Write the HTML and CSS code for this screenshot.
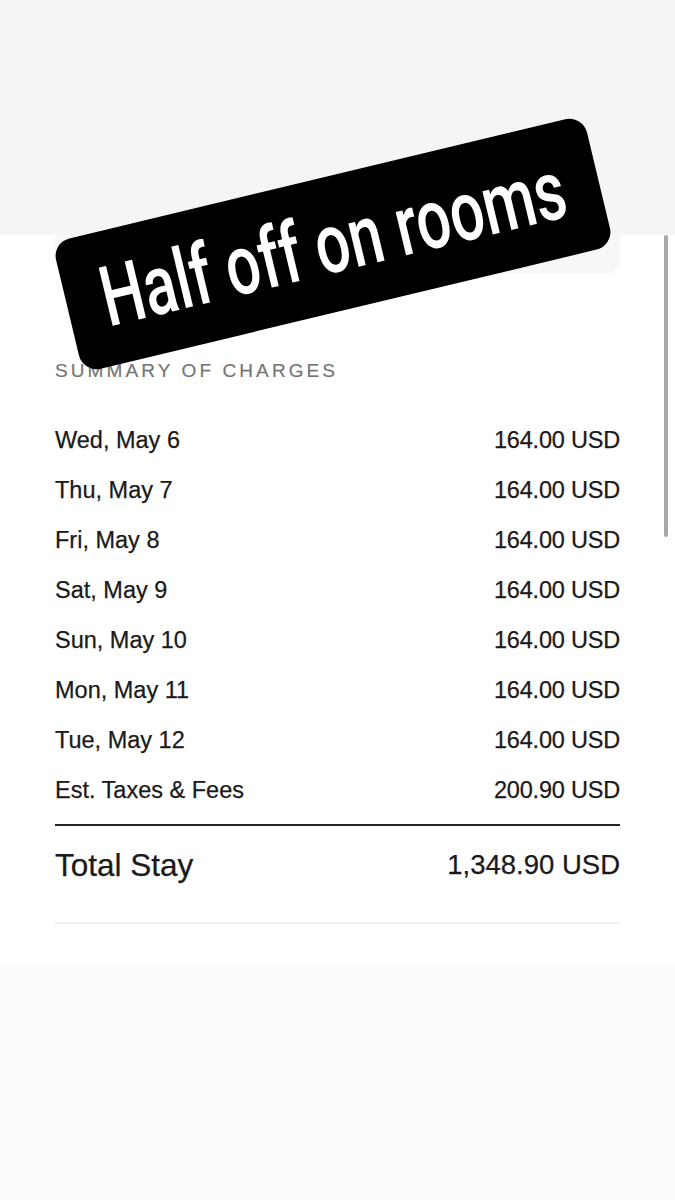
FILE: index.html
```html
<!DOCTYPE html>
<html lang="en">
<head>
<meta charset="utf-8">
<link rel="stylesheet" href="styles.css">
</head>
<body>
<div class="page">
  <div class="band"></div>
  <div class="content">
    <div class="card-tail"></div>
    <h2 class="heading">Summary of Charges</h2>
    <div class="rows">
      <div class="row"><span>Wed, May 6</span><span class="amount">164.00 USD</span></div>
      <div class="row"><span>Thu, May 7</span><span class="amount">164.00 USD</span></div>
      <div class="row"><span>Fri, May 8</span><span class="amount">164.00 USD</span></div>
      <div class="row"><span>Sat, May 9</span><span class="amount">164.00 USD</span></div>
      <div class="row"><span>Sun, May 10</span><span class="amount">164.00 USD</span></div>
      <div class="row"><span>Mon, May 11</span><span class="amount">164.00 USD</span></div>
      <div class="row"><span>Tue, May 12</span><span class="amount">164.00 USD</span></div>
      <div class="row"><span>Est. Taxes &amp; Fees</span><span class="amount">200.90 USD</span></div>
    </div>
    <div class="total"><span class="total-label">Total Stay</span><span class="total-value">1,348.90 USD</span></div>
    <div class="light-rule"></div>
  </div>
  <div class="footer"></div>
  <div class="scrollbar"></div>
  <div class="sticker"><span class="sticker-text">Half off on rooms</span></div>
</div>
</body>
</html>
```
FILE: styles.css
```css
html, body {
  margin: 0;
  padding: 0;
  background: #ffffff;
}
.page {
  position: relative;
  width: 675px;
  height: 1200px;
  overflow: hidden;
  font-family: "Liberation Sans", Arial, sans-serif;
  color: #1a1a1a;
  display: flex;
  flex-direction: column;
}
.band {
  height: 235px;
  background: #f5f5f5;
  flex: none;
}
.content {
  padding: 0 55px;
  display: flex;
  flex-direction: column;
}
.card-tail {
  height: 38px;
  background: #f7f7f7;
  border-radius: 0 0 12px 12px;
}
.heading {
  margin: 86px 0 0;
  font-size: 19px;
  line-height: 24px;
  font-weight: 400;
  letter-spacing: 3.1px;
  text-transform: uppercase;
  color: #757575;
  -webkit-text-stroke: 0.2px #757575;
}
.rows {
  margin-top: 32px;
  display: flex;
  flex-direction: column;
}
.row {
  display: flex;
  justify-content: space-between;
  height: 50px;
  line-height: 50px;
  font-size: 23.5px;
  -webkit-text-stroke: 0.25px #1a1a1a;
}
.amount {
  letter-spacing: -0.2px;
}
.total {
  margin-top: 9px;
  border-top: 2px solid #222;
  padding-top: 14px;
  display: flex;
  justify-content: space-between;
  align-items: center;
  height: 50px;
  -webkit-text-stroke: 0.25px #1a1a1a;
}
.total-label {
  font-size: 31.5px;
}
.total-value {
  font-size: 27.5px;
}
.light-rule {
  margin-top: 32px;
  height: 2px;
  background: #efefef;
}
.footer {
  margin-top: 39px;
  flex: 1;
  background: #fbfbfb;
}
.scrollbar {
  position: absolute;
  left: 664px;
  top: 235px;
  width: 4px;
  height: 302px;
  border-radius: 2px;
  background: #a9a9a9;
}
.sticker {
  position: absolute;
  left: 60px;
  top: 177px;
  width: 546px;
  height: 134px;
  background: #000;
  border-radius: 18px;
  transform: rotate(-13.5deg);
  display: flex;
  align-items: center;
  justify-content: center;
}
.sticker-text {
  display: inline-block;
  color: #fff;
  font-family: Roboto, "Liberation Sans", sans-serif;
  font-weight: 500;
  font-size: 84px;
  line-height: 1;
  white-space: nowrap;
  transform: scaleX(0.72);
}
```
